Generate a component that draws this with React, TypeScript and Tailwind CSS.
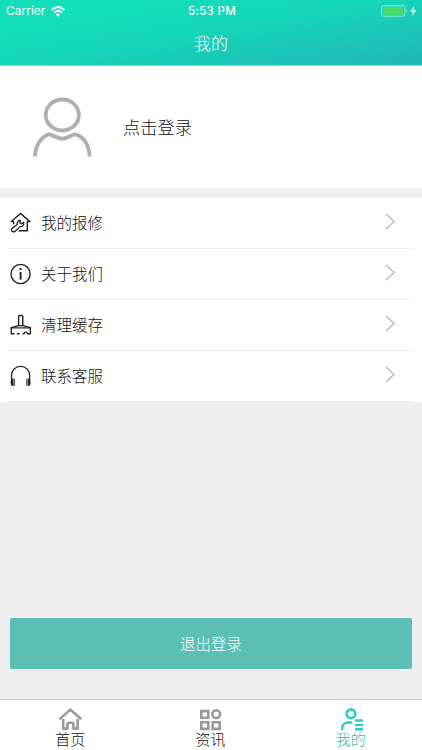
import type { ReactNode } from 'react';

const line = { fill: 'none', stroke: '#222', strokeWidth: 1.4, strokeLinejoin: 'round' as const };

function RepairIcon() {
  return (
    <svg className="h-[22px] w-[22px]" viewBox="0 0 22 22" {...line}>
      <path d="M3.6 12.3V9.6H1.3L10.5 1.4L19.9 9.6H17.3V18.8H8.6" />
      <path d="M1.9 16.6L7.3 12.6C6.6 10.4 8.2 8.3 10.4 8.5L10 10.8L11.4 11.9L13.6 10.4C14.6 12.8 12.6 15.2 10 14.6L5.2 19.2C3.2 21 .2 18.6 1.9 16.6Z" strokeWidth="1.3" />
    </svg>
  );
}

function InfoIcon() {
  return (
    <svg className="h-[22px] w-[22px]" viewBox="0 0 22 22" {...line}>
      <circle cx="10.6" cy="11" r="9.6" />
      <path d="M10.6 9V16.6" strokeWidth="1.9" />
      <circle cx="10.6" cy="6.2" r="1.15" fill="#222" stroke="none" />
    </svg>
  );
}

function BrushIcon() {
  return (
    <svg className="h-[22px] w-[22px]" viewBox="0 0 22 22" {...line}>
      <path d="M8.6 11.6V2.4Q8.6 1.5 9.5 1.5H11.9Q12.8 1.5 12.8 2.4V11.6" />
      <path d="M4.6 19.8H1.2V13.6L8.6 11.6H12.8L20.4 13.6V19.8H17.4C17.2 17.2 14.3 17.2 14.1 19.8H12.6M6.8 19.8H9.6" />
      <path d="M1.2 13.9H20.4" strokeWidth="1.2" />
    </svg>
  );
}

function HeadphonesIcon() {
  return (
    <svg className="h-[22px] w-[22px]" viewBox="0 0 22 22" {...line}>
      <path d="M1.5 14.6V10.5C1.5 5.3 5.5 1.4 10.6 1.4S19.7 5.3 19.7 10.5V14.6" strokeWidth="1.2" />
      <path d="M3.6 13.6H2.4Q.7 14 .7 16V18.6Q.7 20.6 2.4 21H3.6ZM17.6 13.6H18.8Q20.5 14 20.5 16V18.6Q20.5 20.6 18.8 21H17.6Z" fill="#222" stroke="none" />
      <path d="M4.6 13.8V20.8M16.6 13.8V20.8" strokeWidth=".8" />
    </svg>
  );
}

function WifiIcon() {
  return (
    <svg className="ml-1.5 h-[11px] w-[14px]" viewBox="0 0 14 11" fill="none" stroke="white" strokeWidth="1.9">
      <path d="M.6 4.1Q7-1.9 13.4 4.1M3 6.6Q7 3 11 6.6" />
      <path d="M4.8 8.4Q7 6.6 9.2 8.4L7 10.7Z" fill="white" stroke="none" />
    </svg>
  );
}

function Row({ icon, label }: { icon: ReactNode; label: string }) {
  return (
    <div className="mx-2 flex h-[51px] items-center border-b border-[#efefef] pl-0.5">
      {icon}
      <span className="mb-0.5 ml-[9px] text-[15.5px] leading-6">{label}</span>
      <svg className="mb-0.5 ml-auto mr-[18px] h-[18px] w-[11px]" viewBox="0 0 11 18" fill="none" stroke="#bcbcbc" strokeWidth="1.5">
        <path d="M1 1L9 8.5L1 16" />
      </svg>
    </div>
  );
}

function Tab({ label, active = false, children }: { label: string; active?: boolean; children: ReactNode }) {
  const tone = active ? 'text-[#35b8ac]' : 'text-[#111]';
  return (
    <div className={`flex flex-1 flex-col items-center pt-[7px] ${tone}`}>
      <svg className="h-6 w-6" viewBox="0 0 24 24" fill="none" stroke={active ? '#35cdbd' : '#999'} strokeWidth="2.6">
        {children}
      </svg>
      <span className="-mt-[3px] text-[15px] leading-[22px]">{label}</span>
    </div>
  );
}

export default function App() {
  return (
    <main className="flex h-[750px] w-[422px] flex-col overflow-hidden bg-[#efefef] font-['Noto_Sans_CJK_SC',sans-serif] font-light text-[#111]">
      <header className="h-[66px] shrink-0 border-b border-[#80dcd4] bg-[linear-gradient(170deg,#12dfb9_15%,#15d7b9_45%,#20b6b6_100%)] text-white">
        <div className="grid h-[22px] grid-cols-3 items-center font-['Inter',sans-serif] text-[11.5px] font-normal">
          <div className="flex items-center pl-1.5 text-[12px]">Carrier<WifiIcon /></div>
          <div className="pl-0.5 pt-px text-center font-medium tracking-[0.3px]">5:53 PM</div>
          <div className="flex items-center justify-end pr-[5px]">
            <svg className="h-3 w-9" viewBox="0 0 36 12">
              <rect x=".5" y=".8" width="23.4" height="10.4" rx="2" fill="none" stroke="#8becd9" />
              <rect x="2" y="2.3" width="20.4" height="7.4" rx="1" fill="#4cd964" />
              <path d="M25.3 4.2Q27.5 6 25.3 7.8Z" fill="#8becd9" />
              <path d="M33.3 1L29.2 6.7H31.9L31 11L35.2 5.3H32.4Z" fill="white" />
            </svg>
          </div>
        </div>
        <h1 className="text-center text-[17px] leading-[41px]">我的</h1>
      </header>

      <section className="flex h-[122px] shrink-0 items-center bg-white pl-8">
        <svg className="h-[62px] w-[60px]" viewBox="0 0 60 62" fill="none" stroke="#afafaf" strokeWidth="3.8">
          <ellipse cx="30.3" cy="19" rx="16.6" ry="15.5" />
          <path d="M3 60.5C3.3 49.5 9 41.5 16 38.5C19.5 37.1 24 42.7 30.3 42.7S41 37.1 44.5 38.5C52 41.5 57.3 49.5 57.6 60.5" />
        </svg>
        <span className="mb-px ml-[31px] text-[17.3px]">点击登录</span>
      </section>

      <section className="mt-2.5 shrink-0 bg-white">
        <Row icon={<RepairIcon />} label="我的报修" />
        <Row icon={<InfoIcon />} label="关于我们" />
        <Row icon={<BrushIcon />} label="清理缓存" />
        <Row icon={<HeadphonesIcon />} label="联系客服" />
      </section>

      <button className="mx-2.5 mb-[30px] mt-auto h-[51px] shrink-0 rounded-[2px] bg-[#5cbfb5] text-[15.5px] text-white">退出登录</button>

      <nav className="flex h-[51px] shrink-0 border-t border-[#c9c9c9] bg-white pr-px">
        <Tab label="首页">
          <path d="M2.3 11.4L12.4 2.6L22.5 11.4" strokeLinecap="round" strokeWidth="2.6" />
          <path d="M5.2 12V21.6H9.4V16.8Q9.4 15.8 10.4 15.8H14.4Q15.4 15.8 15.4 16.8V21.6H19.6V12" strokeLinejoin="round" strokeWidth="2.6" />
        </Tab>
        <Tab label="资讯">
          <path d="M3.3 4.1H10.3V10.7H3.3ZM3.3 15.3H10.3V21.9H3.3ZM14.7 15.3H21.7V21.9H14.7Z" />
          <circle cx="18.2" cy="7.1" r="3.9" />
        </Tab>
        <Tab label="我的" active>
          <circle cx="12" cy="6.8" r="4.3" strokeWidth="2.8" />
          <path d="M3.2 23.2V21.5Q3.2 15.5 9.3 15.5H13.3M15.9 13.5H23.9M15.9 18H23.9M15.9 22.3H23.9" strokeWidth="2.4" />
        </Tab>
      </nav>
    </main>
  );
}
